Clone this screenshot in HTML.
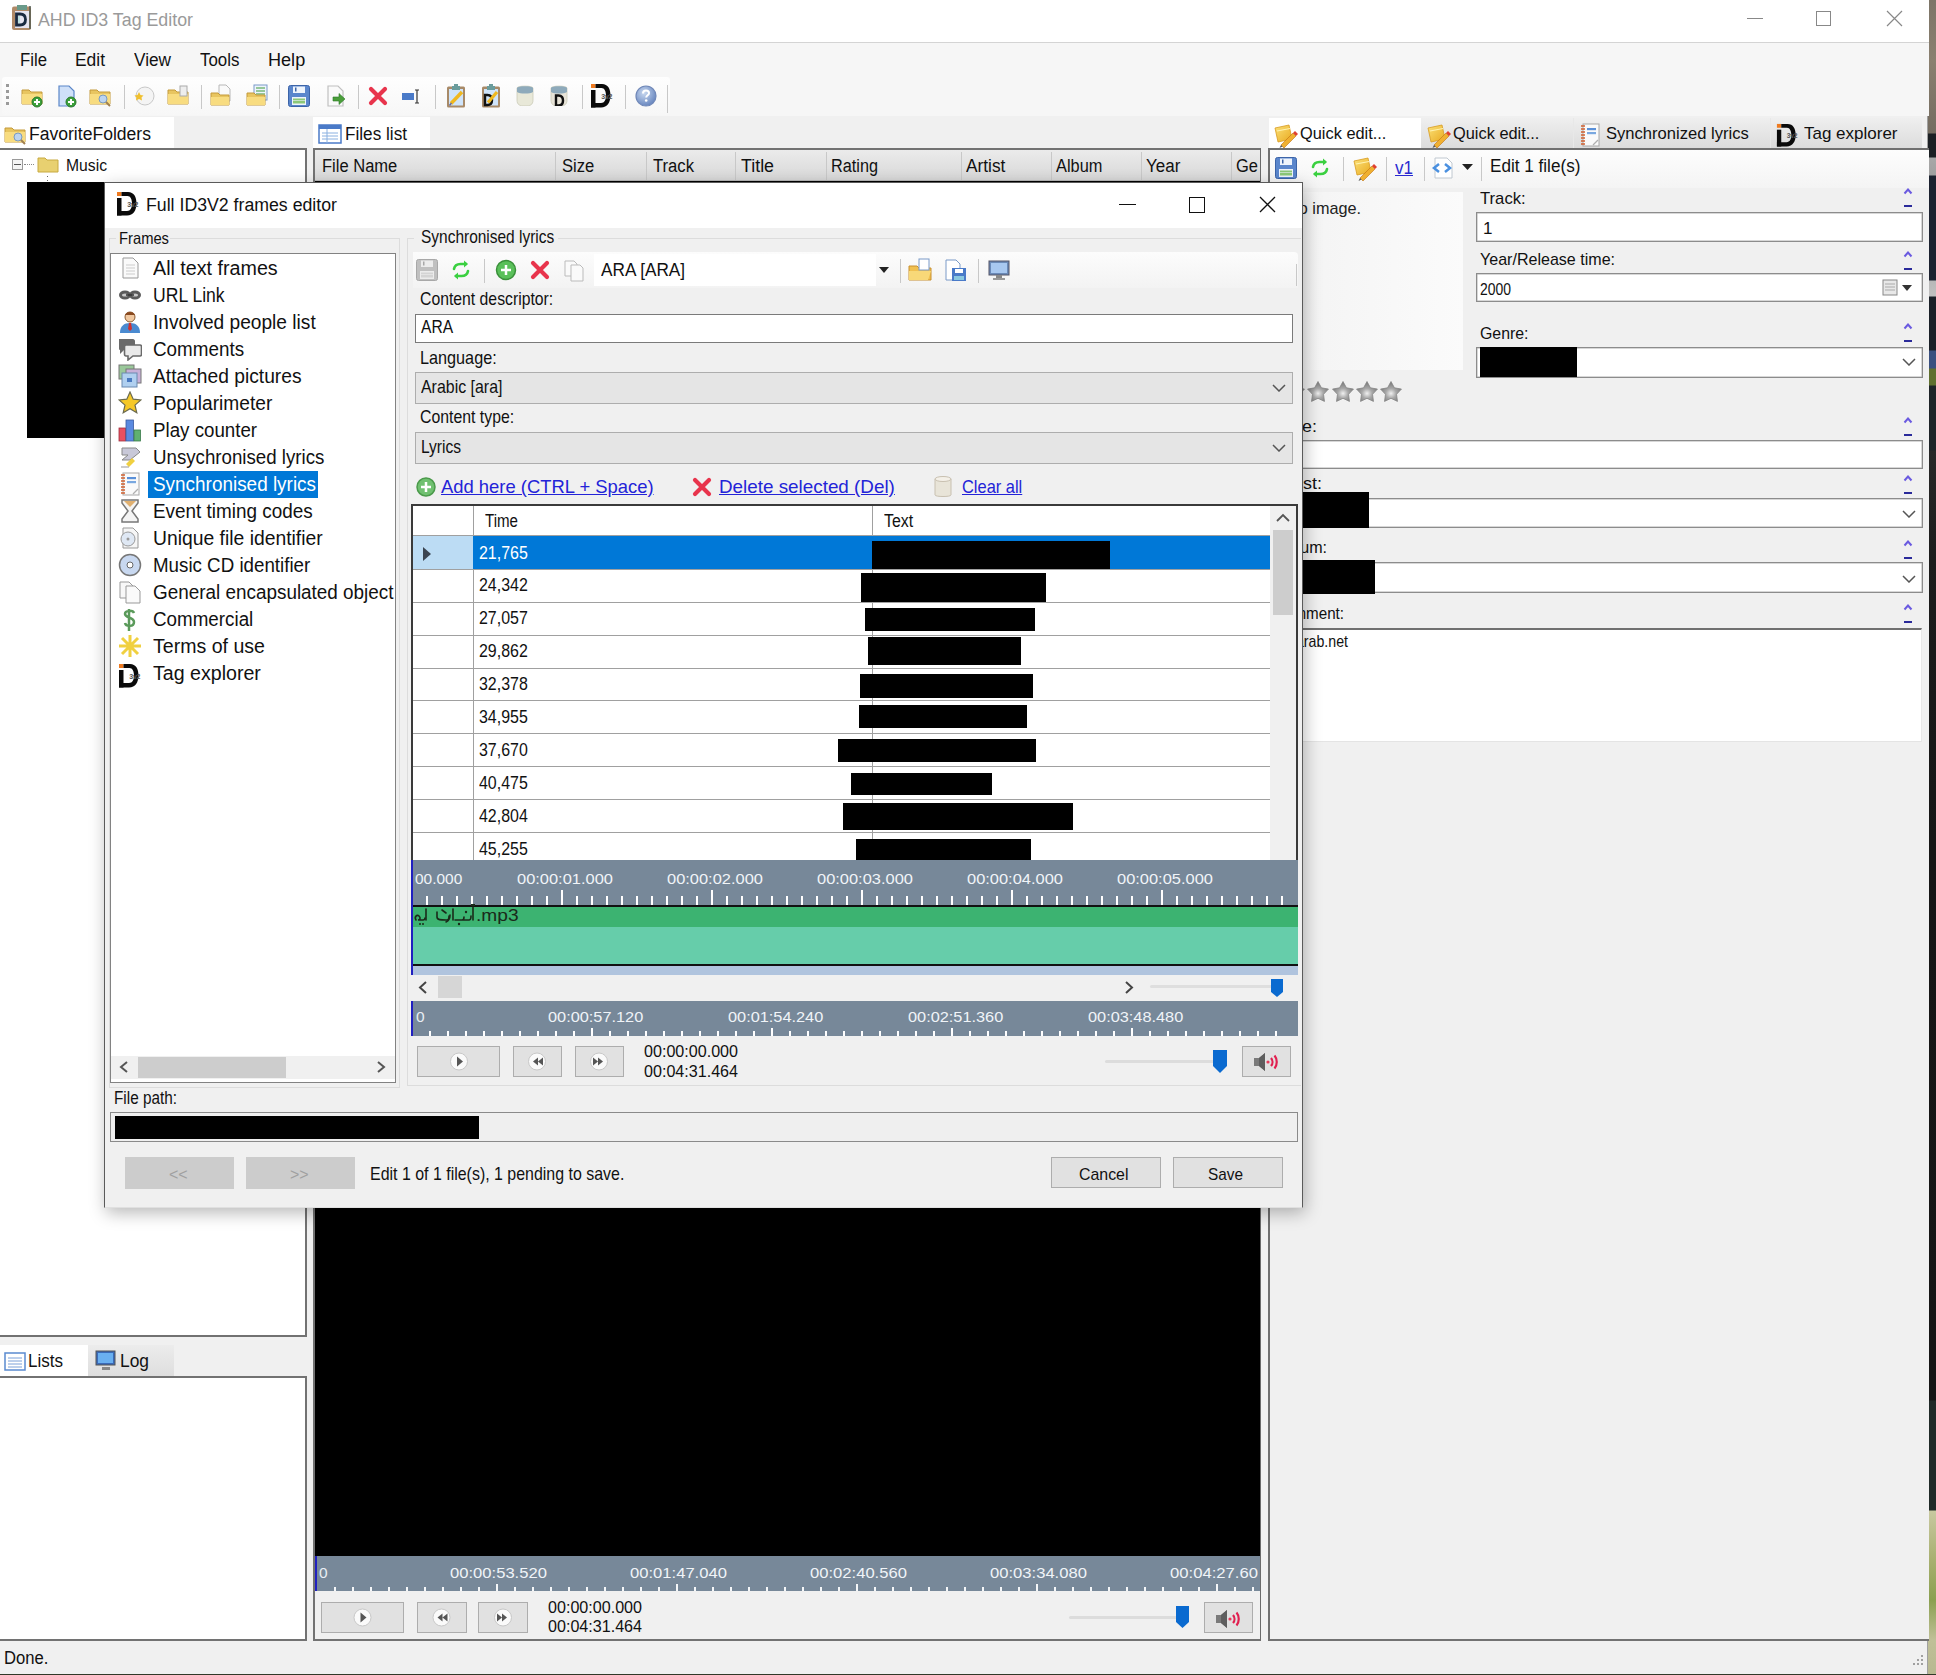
<!DOCTYPE html>
<html><head><meta charset="utf-8">
<style>
*{box-sizing:border-box;margin:0;padding:0}
html,body{width:1936px;height:1675px;overflow:hidden;background:#f0f0f0;font-family:"Liberation Sans",sans-serif;color:#000}
.a{position:absolute;display:block}
.t{position:absolute;white-space:nowrap;line-height:1}
#root{position:absolute;left:0;top:0;width:1936px;height:1675px;background:#f0f0f0;overflow:hidden}
</style></head><body><div id="root">
<div class="a" style="left:1928px;top:0px;width:8px;height:1675px;background:linear-gradient(#7d7568 0,#8a8070 60px,#746c60 133px,#1c2024 134px,#1c2024 157px,#a8a8a8 158px,#a0a0a0 175px,#1c2230 176px,#1c2230 280px,#b8b8b8 281px,#c0c0c0 296px,#1a2028 297px,#1a2028 350px,#3a5080 351px,#3a5080 368px,#607030 369px,#607030 385px,#1e2428 386px,#1e2428 450px,#282828 451px,#1c1c1c 560px,#161616 840px,#151515 1400px,#202a28 1401px,#202a28 1510px,#c8c8a0 1511px,#a8b070 1560px,#8aa050 1600px,#c0c098 1640px,#b8b890 1675px)"></div>
<div class="a" style="left:1927px;top:0px;width:1px;height:1675px;background:#a0a0a0"></div>
<div class="a" style="left:0px;top:0px;width:1929px;height:43px;background:#fff;border-bottom:1px solid #d4d4d4"></div>
<svg class="a" style="left:11px;top:5px" width="22" height="26" viewBox="0 0 22 26"><rect x="1" y="1.5" width="19" height="23.5" rx="2" fill="#b08a68"/><rect x="4" y="6" width="14" height="17" fill="#e6e4f0"/><path d="M6 0h10v5H6z" fill="#6a9a8a"/><path d="M19 1v23" stroke="#505a50" stroke-width="1.5"/><path d="M5.5 9h3.5c4 0 5.5 2.5 5.5 5.5S13 20 9 20H5.5z" fill="none" stroke="#1a2a40" stroke-width="2.8"/><path d="M8 11v7" stroke="#bfe0e0" stroke-width="2"/></svg>
<div class="t" style="left:38px;top:10.8px;font-size:18px;color:#9a9a9a;transform:scaleX(0.9888);transform-origin:0 0;">AHD ID3 Tag Editor</div>
<div class="a" style="left:1747px;top:18px;width:16px;height:1px;background:#888"></div>
<div class="a" style="left:1816px;top:11px;width:15px;height:15px;border:1px solid #888"></div>
<svg class="a" style="left:1886px;top:10px" width="17" height="17" viewBox="0 0 17 17"><path d="M1 1L16 16M16 1L1 16" stroke="#888" stroke-width="1.2"/></svg>
<div class="a" style="left:0px;top:43px;width:1929px;height:73px;background:#f6f6f6"></div>
<div class="t" style="left:20px;top:50.8px;font-size:18px;color:#111;transform:scaleX(0.9305);transform-origin:0 0;">File</div>
<div class="t" style="left:75px;top:50.8px;font-size:18px;color:#111;transform:scaleX(0.9673);transform-origin:0 0;">Edit</div>
<div class="t" style="left:134px;top:50.8px;font-size:18px;color:#111;transform:scaleX(0.9564);transform-origin:0 0;">View</div>
<div class="t" style="left:200px;top:50.8px;font-size:18px;color:#111;transform:scaleX(0.9374);transform-origin:0 0;">Tools</div>
<div class="t" style="left:268px;top:50.8px;font-size:18px;color:#111;transform:scaleX(1.0046);transform-origin:0 0;">Help</div>
<div class="a" style="left:2px;top:77px;width:668px;height:38px;background:linear-gradient(#fefefe,#f7f7f7);border-radius:3px"></div>
<div class="a" style="left:6px;top:84px;width:3px;height:3px;background:#9a9a9a"></div>
<div class="a" style="left:6px;top:90px;width:3px;height:3px;background:#9a9a9a"></div>
<div class="a" style="left:6px;top:96px;width:3px;height:3px;background:#9a9a9a"></div>
<div class="a" style="left:6px;top:102px;width:3px;height:3px;background:#9a9a9a"></div>
<svg class="a" style="left:20px;top:84px" width="24" height="24" viewBox="0 0 24 24"><path d="M2 6h7l2 2h11v12H2z" fill="#e8c560" stroke="#c49a3a" stroke-width="1"/><path d="M2 10h20v10H2z" fill="#f8dc80"/><circle cx="17" cy="18" r="5" fill="#3aa03a" stroke="#2a7a2a"/><path d="M14 18h6M17 15v6" stroke="#fff" stroke-width="2"/></svg>
<svg class="a" style="left:54px;top:84px" width="24" height="24" viewBox="0 0 24 24"><path d="M5 2h10l5 5v15H5z" fill="#cfe0f8" stroke="#5a86c8" stroke-width="1.2"/><circle cx="17" cy="18" r="5" fill="#3aa03a" stroke="#2a7a2a"/><path d="M14 18h6M17 15v6" stroke="#fff" stroke-width="2"/></svg>
<svg class="a" style="left:88px;top:84px" width="24" height="24" viewBox="0 0 24 24"><path d="M2 6h7l2 2h11v12H2z" fill="#e8c560" stroke="#c49a3a" stroke-width="1"/><path d="M2 10h20v10H2z" fill="#f8dc80"/><circle cx="15" cy="15" r="4" fill="#bcd4f0" stroke="#7a9ac0"/><path d="M18 18l4 4" stroke="#a08050" stroke-width="2"/></svg>
<div class="a" style="left:124px;top:85px;width:1px;height:24px;background:#c8c8c8"></div>
<svg class="a" style="left:132px;top:84px" width="24" height="24" viewBox="0 0 24 24"><circle cx="13" cy="12" r="9" fill="#f4f4f4" stroke="#c8c8c8"/><path d="M7 8l1.5 3 3 .5-2 2 .5 3-3-1.5-3 1.5.5-3-2-2 3-.5z" fill="#f0c030"/></svg>
<svg class="a" style="left:166px;top:84px" width="24" height="24" viewBox="0 0 24 24"><path d="M2 6h7l2 2h11v12H2z" fill="#e8c560" stroke="#c49a3a" stroke-width="1"/><path d="M2 10h20v10H2z" fill="#f8dc80"/><rect x="14" y="2" width="7" height="10" fill="#eee" stroke="#aaa"/></svg>
<div class="a" style="left:201px;top:85px;width:1px;height:24px;background:#c8c8c8"></div>
<svg class="a" style="left:209px;top:84px" width="24" height="24" viewBox="0 0 24 24"><path d="M10 1h7l4 4v12H10z" fill="#fafafa" stroke="#b8b8b8"/><path d="M2 9h7l2 2h9v10H2z" fill="#e8c560" stroke="#c49a3a"/><path d="M2 13h18v8H2z" fill="#f8dc80"/></svg>
<svg class="a" style="left:245px;top:84px" width="24" height="24" viewBox="0 0 24 24"><rect x="9" y="1" width="13" height="15" fill="#eef4fc" stroke="#7a9ac8"/><path d="M11 4h9M11 7h9M11 10h9" stroke="#78b878" stroke-width="1.4"/><path d="M2 9h7l2 2h9v10H2z" fill="#e8c560" stroke="#c49a3a"/><path d="M2 13h18v8H2z" fill="#f8dc80"/></svg>
<div class="a" style="left:279px;top:85px;width:1px;height:24px;background:#c8c8c8"></div>
<svg class="a" style="left:287px;top:84px" width="24" height="24" viewBox="0 0 24 24"><rect x="1.5" y="1.5" width="21" height="21" rx="2" fill="#5a86cc" stroke="#3c64a8"/><rect x="6" y="2.5" width="12" height="6.5" fill="#eef4fc"/><rect x="8" y="3.5" width="1.5" height="4" fill="#3c64a8"/><rect x="5" y="13" width="14" height="8" fill="#eef4fc"/><rect x="6" y="14.5" width="12" height="5" fill="#8cc878"/><path d="M6 16.5h12" stroke="#eef4fc" stroke-width=".6"/></svg>
<svg class="a" style="left:323px;top:84px" width="24" height="24" viewBox="0 0 24 24"><path d="M5 2h10l5 5v15H5z" fill="#fafafa" stroke="#c0c0c0" stroke-width="1.2"/><path d="M10 13h6v-3.5l6 5.5-6 5.5V17h-6z" fill="#4a9e3a" stroke="#2e7a2a" stroke-width=".6"/></svg>
<div class="a" style="left:358px;top:85px;width:1px;height:24px;background:#c8c8c8"></div>
<svg class="a" style="left:366px;top:84px" width="24" height="24" viewBox="0 0 24 24"><path d="M5 5L19 19M19 5L5 19" stroke="#e8344c" stroke-width="4.2" stroke-linecap="round"/></svg>
<svg class="a" style="left:400px;top:84px" width="24" height="24" viewBox="0 0 24 24"><rect x="2" y="9" width="12" height="7" fill="#4a7ac8"/><path d="M17 6v13M15 6h4M15 19h4" stroke="#333" stroke-width="1.2"/></svg>
<div class="a" style="left:435px;top:85px;width:1px;height:24px;background:#c8c8c8"></div>
<svg class="a" style="left:446px;top:84px" width="20" height="24" viewBox="0 0 20 24"><rect x="1" y="2.5" width="18" height="21" rx="1.5" fill="#a88a68"/><rect x="3" y="5" width="14" height="16.5" fill="#cfe4fa"/><path d="M6 2h8v4H6z" fill="#6a9c9c"/><path d="M8 0h4v2H8z" fill="#6a9c9c"/><path d="M5 19.5L16 8" stroke="#f0b820" stroke-width="3.5"/><path d="M3.5 21.5l2-2.5" stroke="#6a6a9a" stroke-width="1.5"/></svg>
<svg class="a" style="left:481px;top:84px" width="20" height="24" viewBox="0 0 20 24"><rect x="1" y="2.5" width="18" height="21" rx="1.5" fill="#a88a68"/><rect x="3" y="5" width="14" height="16.5" fill="#cfe4fa"/><path d="M6 2h8v4H6z" fill="#6a9c9c"/><path d="M8 0h4v2H8z" fill="#6a9c9c"/><path d="M4 11h2.5c3.5 0 4.5 2.5 4.5 5s-1 5-4.5 5H4z" fill="none" stroke="#111" stroke-width="2.4"/><path d="M7 18.5L16 8" stroke="#f0b820" stroke-width="3.2"/></svg>
<svg class="a" style="left:516px;top:85px" width="18" height="21" viewBox="0 0 18 21"><path d="M1 3c0-2.5 16-2.5 16 0v12c0 5-3 6-8 6s-8-1-8-6z" fill="#e8e8d8" stroke="#cacab8" stroke-width=".8"/><path d="M1 3c0-2.5 16-2.5 16 0v4c-3 2-13 2-16 0z" fill="#8eaabb"/></svg>
<svg class="a" style="left:550px;top:85px" width="18" height="21" viewBox="0 0 18 21"><path d="M1 3c0-2.5 16-2.5 16 0v12c0 5-3 6-8 6s-8-1-8-6z" fill="#e8e4d8" stroke="#cacab8" stroke-width=".8"/><path d="M1 3c0-2.5 16-2.5 16 0v4c-3 2-13 2-16 0z" fill="#8eaabb"/><path d="M6 10.5h2.5c3.5 0 4.5 2.5 4.5 5s-1 5-4.5 5H6z" fill="none" stroke="#111" stroke-width="2.4"/></svg>
<div class="a" style="left:582px;top:85px;width:1px;height:24px;background:#c8c8c8"></div>
<svg class="a" style="left:589px;top:82px" width="26" height="26" viewBox="0 0 26 26"><rect x="2" y="2" width="4.5" height="4" fill="#ee7a20"/><rect x="2" y="8" width="4.5" height="17.5" fill="#0a0a0a"/><path d="M6.5 2H13C19 2 21.5 7 21.5 13.5S18.5 25.5 12 25.5H2V21H12C15.5 21 17 17.5 17 13.5S15.5 6 12.5 6H6.5z" fill="#0a0a0a"/><text x="12.3" y="16.6" font-size="7" font-weight="bold" fill="#555" font-family="Liberation Sans" letter-spacing="-0.3">3v2</text></svg>
<div class="a" style="left:625px;top:85px;width:1px;height:24px;background:#c8c8c8"></div>
<svg class="a" style="left:634px;top:84px" width="24" height="24" viewBox="0 0 24 24"><defs><radialGradient id="hg" cx="40%" cy="35%" r="65%"><stop offset="0" stop-color="#c8d8f0"/><stop offset="1" stop-color="#6a88c0"/></radialGradient></defs><circle cx="12" cy="12" r="10" fill="url(#hg)" stroke="#7088b8" stroke-width="1.2"/><path d="M9 9.5c0-2 1.3-3 3-3s3 1 3 2.7c0 2-2.8 2.3-2.8 4.3" stroke="#fff" stroke-width="2" fill="none"/><circle cx="12.2" cy="16.5" r="1.3" fill="#fff"/></svg>
<div class="a" style="left:667px;top:85px;width:1px;height:28px;background:#c8c8c8"></div>
<div class="a" style="left:0px;top:117px;width:174px;height:32px;background:#fff"></div>
<svg class="a" style="left:3px;top:122px" width="24" height="24" viewBox="0 0 24 24"><path d="M2 6h7l2 2h11v12H2z" fill="#e8c560" stroke="#c49a3a" stroke-width="1"/><path d="M2 10h20v10H2z" fill="#f8dc80"/><circle cx="15" cy="15" r="4" fill="#bcd4f0" stroke="#7a9ac0"/><path d="M18 18l4 4" stroke="#a08050" stroke-width="2"/></svg>
<div class="t" style="left:29px;top:124.8px;font-size:18px;color:#111;transform:scaleX(0.9753);transform-origin:0 0;">FavoriteFolders</div>
<div class="a" style="left:-2px;top:148px;width:309px;height:1189px;background:#fff;border:2px solid #727272"></div>
<div class="a" style="left:12px;top:159px;width:11px;height:11px;border:1px solid #9a9a9a;background:#f4f4f4"></div>
<div class="a" style="left:14px;top:164px;width:7px;height:1px;background:#555"></div>
<div class="a" style="left:24px;top:164px;width:10px;height:1px;border-top:1px dotted #888"></div>
<svg class="a" style="left:36px;top:152px" width="24" height="24" viewBox="0 0 24 24"><path d="M2 6h7l2 2h11v12H2z" fill="#e8d070" stroke="#c8aa40"/></svg>
<div class="t" style="left:66px;top:156.5px;font-size:16.5px;color:#111;transform:scaleX(0.9514);transform-origin:0 0;">Music</div>
<div class="a" style="left:47px;top:176px;width:1px;height:1px;background:#666"></div>
<div class="a" style="left:47px;top:180px;width:1px;height:1px;background:#666"></div>
<div class="a" style="left:0px;top:1345px;width:88px;height:32px;background:#fff"></div>
<div class="a" style="left:88px;top:1345px;width:86px;height:31px;background:linear-gradient(#ececec,#dedede)"></div>
<svg class="a" style="left:4px;top:1350px" width="22" height="22" viewBox="0 0 22 22"><rect x="1" y="3" width="20" height="17" fill="#fff" stroke="#5a8ad0" stroke-width="1.5"/><path d="M4 8h14M4 11h14M4 14h14M4 17h14" stroke="#7aa0d8"/></svg>
<div class="t" style="left:28.2px;top:1351.7px;font-size:18px;color:#111;transform:scaleX(0.9455);transform-origin:0 0;">Lists</div>
<svg class="a" style="left:94px;top:1348px" width="24" height="24" viewBox="0 0 24 24"><rect x="2" y="3" width="19" height="14" fill="#3a6ab8" stroke="#555"/><rect x="4" y="5" width="15" height="10" fill="#6ab0f0"/><path d="M8 19h8v3H8z" fill="#888"/></svg>
<div class="t" style="left:120px;top:1351.7px;font-size:18px;color:#111;transform:scaleX(0.9652);transform-origin:0 0;">Log</div>
<div class="a" style="left:-2px;top:1376px;width:309px;height:265px;background:#fff;border:2px solid #727272"></div>
<div class="a" style="left:313px;top:117px;width:117px;height:32px;background:#fff"></div>
<svg class="a" style="left:318px;top:122px" width="24" height="24" viewBox="0 0 24 24"><rect x="1" y="3" width="22" height="18" fill="#fff" stroke="#4a7ac8" stroke-width="1.5"/><rect x="1" y="3" width="22" height="4" fill="#4a7ac8"/><path d="M4 11h16M4 14h16M4 17h16M9 7v14" stroke="#8ab0e0"/></svg>
<div class="t" style="left:345px;top:124.8px;font-size:18px;color:#111;transform:scaleX(0.9536);transform-origin:0 0;">Files list</div>
<div class="a" style="left:313px;top:148px;width:948px;height:1493px;background:#000;border:2px solid #727272;border-right:1px solid #6a6a6a"></div>
<div class="a" style="left:315px;top:150px;width:945px;height:31px;background:linear-gradient(#ebebeb,#d8d8d8);border-bottom:1px solid #b8b8b8"></div>
<div class="t" style="left:322px;top:157.0px;font-size:18px;color:#111;transform:scaleX(0.9178);transform-origin:0 0;">File Name</div>
<div class="t" style="left:561.6px;top:157.0px;font-size:18px;color:#111;transform:scaleX(0.9224);transform-origin:0 0;">Size</div>
<div class="t" style="left:652.7px;top:157.0px;font-size:18px;color:#111;transform:scaleX(0.9246);transform-origin:0 0;">Track</div>
<div class="t" style="left:741.3px;top:157.0px;font-size:18px;color:#111;transform:scaleX(0.9897);transform-origin:0 0;">Title</div>
<div class="t" style="left:831.3px;top:157.0px;font-size:18px;color:#111;transform:scaleX(0.9030);transform-origin:0 0;">Rating</div>
<div class="t" style="left:965.6px;top:157.0px;font-size:18px;color:#111;transform:scaleX(0.9585);transform-origin:0 0;">Artist</div>
<div class="t" style="left:1056.3px;top:157.0px;font-size:18px;color:#111;transform:scaleX(0.9092);transform-origin:0 0;">Album</div>
<div class="t" style="left:1146.3px;top:157.0px;font-size:18px;color:#111;transform:scaleX(0.9430);transform-origin:0 0;">Year</div>
<div class="t" style="left:1236px;top:157.0px;font-size:18px;color:#111;transform:scaleX(0.9161);transform-origin:0 0;">Ge</div>
<div class="a" style="left:555px;top:152px;width:1px;height:28px;background:#c8c8c8"></div>
<div class="a" style="left:646px;top:152px;width:1px;height:28px;background:#c8c8c8"></div>
<div class="a" style="left:735px;top:152px;width:1px;height:28px;background:#c8c8c8"></div>
<div class="a" style="left:826px;top:152px;width:1px;height:28px;background:#c8c8c8"></div>
<div class="a" style="left:961px;top:152px;width:1px;height:28px;background:#c8c8c8"></div>
<div class="a" style="left:1051px;top:152px;width:1px;height:28px;background:#c8c8c8"></div>
<div class="a" style="left:1141px;top:152px;width:1px;height:28px;background:#c8c8c8"></div>
<div class="a" style="left:1231px;top:152px;width:1px;height:28px;background:#c8c8c8"></div>
<div class="a" style="left:315px;top:1556px;width:945px;height:35px;background:#778899"></div>
<div class="a" style="left:315px;top:1556px;width:2px;height:35px;background:#2020c0"></div>
<div class="t" style="left:319px;top:1564.5px;font-size:15.5px;color:#e8eef4;">0</div>
<div class="t" style="left:450px;top:1564.5px;font-size:15.5px;color:#f0f4f8;transform:scaleX(1.0711);transform-origin:0 0;">00:00:53.520</div>
<div class="t" style="left:630px;top:1564.5px;font-size:15.5px;color:#f0f4f8;transform:scaleX(1.0711);transform-origin:0 0;">00:01:47.040</div>
<div class="t" style="left:810px;top:1564.5px;font-size:15.5px;color:#f0f4f8;transform:scaleX(1.0711);transform-origin:0 0;">00:02:40.560</div>
<div class="t" style="left:990px;top:1564.5px;font-size:15.5px;color:#f0f4f8;transform:scaleX(1.0711);transform-origin:0 0;">00:03:34.080</div>
<div class="t" style="left:1170px;top:1564.5px;font-size:15.5px;color:#f0f4f8;transform:scaleX(1.0740);transform-origin:0 0;">00:04:27.60</div>
<div class="a" style="left:334px;top:1587px;width:2px;height:4px;background:#f4f6f8"></div>
<div class="a" style="left:352px;top:1587px;width:2px;height:4px;background:#f4f6f8"></div>
<div class="a" style="left:370px;top:1587px;width:2px;height:4px;background:#f4f6f8"></div>
<div class="a" style="left:388px;top:1587px;width:2px;height:4px;background:#f4f6f8"></div>
<div class="a" style="left:406px;top:1587px;width:2px;height:4px;background:#f4f6f8"></div>
<div class="a" style="left:424px;top:1587px;width:2px;height:4px;background:#f4f6f8"></div>
<div class="a" style="left:442px;top:1587px;width:2px;height:4px;background:#f4f6f8"></div>
<div class="a" style="left:460px;top:1587px;width:2px;height:4px;background:#f4f6f8"></div>
<div class="a" style="left:478px;top:1587px;width:2px;height:4px;background:#f4f6f8"></div>
<div class="a" style="left:496px;top:1584px;width:2px;height:7px;background:#f4f6f8"></div>
<div class="a" style="left:514px;top:1587px;width:2px;height:4px;background:#f4f6f8"></div>
<div class="a" style="left:532px;top:1587px;width:2px;height:4px;background:#f4f6f8"></div>
<div class="a" style="left:550px;top:1587px;width:2px;height:4px;background:#f4f6f8"></div>
<div class="a" style="left:568px;top:1587px;width:2px;height:4px;background:#f4f6f8"></div>
<div class="a" style="left:586px;top:1587px;width:2px;height:4px;background:#f4f6f8"></div>
<div class="a" style="left:604px;top:1587px;width:2px;height:4px;background:#f4f6f8"></div>
<div class="a" style="left:622px;top:1587px;width:2px;height:4px;background:#f4f6f8"></div>
<div class="a" style="left:640px;top:1587px;width:2px;height:4px;background:#f4f6f8"></div>
<div class="a" style="left:658px;top:1587px;width:2px;height:4px;background:#f4f6f8"></div>
<div class="a" style="left:676px;top:1584px;width:2px;height:7px;background:#f4f6f8"></div>
<div class="a" style="left:694px;top:1587px;width:2px;height:4px;background:#f4f6f8"></div>
<div class="a" style="left:712px;top:1587px;width:2px;height:4px;background:#f4f6f8"></div>
<div class="a" style="left:730px;top:1587px;width:2px;height:4px;background:#f4f6f8"></div>
<div class="a" style="left:748px;top:1587px;width:2px;height:4px;background:#f4f6f8"></div>
<div class="a" style="left:766px;top:1587px;width:2px;height:4px;background:#f4f6f8"></div>
<div class="a" style="left:784px;top:1587px;width:2px;height:4px;background:#f4f6f8"></div>
<div class="a" style="left:802px;top:1587px;width:2px;height:4px;background:#f4f6f8"></div>
<div class="a" style="left:820px;top:1587px;width:2px;height:4px;background:#f4f6f8"></div>
<div class="a" style="left:838px;top:1587px;width:2px;height:4px;background:#f4f6f8"></div>
<div class="a" style="left:856px;top:1584px;width:2px;height:7px;background:#f4f6f8"></div>
<div class="a" style="left:874px;top:1587px;width:2px;height:4px;background:#f4f6f8"></div>
<div class="a" style="left:892px;top:1587px;width:2px;height:4px;background:#f4f6f8"></div>
<div class="a" style="left:910px;top:1587px;width:2px;height:4px;background:#f4f6f8"></div>
<div class="a" style="left:928px;top:1587px;width:2px;height:4px;background:#f4f6f8"></div>
<div class="a" style="left:946px;top:1587px;width:2px;height:4px;background:#f4f6f8"></div>
<div class="a" style="left:964px;top:1587px;width:2px;height:4px;background:#f4f6f8"></div>
<div class="a" style="left:982px;top:1587px;width:2px;height:4px;background:#f4f6f8"></div>
<div class="a" style="left:1000px;top:1587px;width:2px;height:4px;background:#f4f6f8"></div>
<div class="a" style="left:1018px;top:1587px;width:2px;height:4px;background:#f4f6f8"></div>
<div class="a" style="left:1036px;top:1584px;width:2px;height:7px;background:#f4f6f8"></div>
<div class="a" style="left:1054px;top:1587px;width:2px;height:4px;background:#f4f6f8"></div>
<div class="a" style="left:1072px;top:1587px;width:2px;height:4px;background:#f4f6f8"></div>
<div class="a" style="left:1090px;top:1587px;width:2px;height:4px;background:#f4f6f8"></div>
<div class="a" style="left:1108px;top:1587px;width:2px;height:4px;background:#f4f6f8"></div>
<div class="a" style="left:1126px;top:1587px;width:2px;height:4px;background:#f4f6f8"></div>
<div class="a" style="left:1144px;top:1587px;width:2px;height:4px;background:#f4f6f8"></div>
<div class="a" style="left:1162px;top:1587px;width:2px;height:4px;background:#f4f6f8"></div>
<div class="a" style="left:1180px;top:1587px;width:2px;height:4px;background:#f4f6f8"></div>
<div class="a" style="left:1198px;top:1587px;width:2px;height:4px;background:#f4f6f8"></div>
<div class="a" style="left:1216px;top:1584px;width:2px;height:7px;background:#f4f6f8"></div>
<div class="a" style="left:1234px;top:1587px;width:2px;height:4px;background:#f4f6f8"></div>
<div class="a" style="left:1252px;top:1587px;width:2px;height:4px;background:#f4f6f8"></div>
<div class="a" style="left:315px;top:1591px;width:945px;height:48px;background:#f0f0f0"></div>
<div class="a" style="left:321px;top:1602px;width:83px;height:31px;background:#e1e1e1;border:1px solid #adadad"></div>
<div class="a" style="left:417px;top:1602px;width:50px;height:31px;background:#e1e1e1;border:1px solid #adadad"></div>
<div class="a" style="left:478px;top:1602px;width:50px;height:31px;background:#e1e1e1;border:1px solid #adadad"></div>
<svg class="a" style="left:321px;top:1602px" width="210" height="31" viewBox="0 0 210 31"><circle cx="41.5" cy="15.5" r="8.5" fill="#fafafa" stroke="#c8c8c8"/><path d="M39.5 10.5l6 5-6 5z" fill="#555"/><circle cx="120.5" cy="15.5" r="8.5" fill="#fafafa" stroke="#c8c8c8"/><path d="M121.5 11.5l-5 4 5 4zM126.5 11.5l-5 4 5 4z" fill="#555"/><circle cx="182" cy="15.5" r="8.5" fill="#fafafa" stroke="#c8c8c8"/><path d="M176 11.5l5 4-5 4zM181 11.5l5 4-5 4z" fill="#555"/></svg>
<div class="t" style="left:547.7px;top:1599.4px;font-size:17px;color:#111;transform:scaleX(0.9473);transform-origin:0 0;">00:00:00.000</div>
<div class="t" style="left:547.7px;top:1618.2px;font-size:17px;color:#111;transform:scaleX(0.9473);transform-origin:0 0;">00:04:31.464</div>
<div class="a" style="left:1069px;top:1616px;width:108px;height:3px;background:#dcdcdc;border-radius:2px"></div>
<svg class="a" style="left:1175px;top:1605px" width="15" height="24" viewBox="0 0 15 24"><path d="M1 1h13v16l-6.5 6-6.5-6z" fill="#0a6ad0"/></svg>
<div class="a" style="left:1204px;top:1602px;width:49px;height:31px;background:#e1e1e1;border:1px solid #adadad"></div>
<svg class="a" style="left:1216px;top:1610px" width="25" height="18" viewBox="0 0 25 18"><path d="M0 5h5l6-5v18l-6-5H0z" fill="#7a7a7a"/><path d="M5 5l6-5v18l-6-5z" fill="#5e5e5e"/><circle cx="14" cy="9" r="1.6" fill="#e83a5a"/><path d="M17 5c2 2.3 2 5.7 0 8M20.5 2.5c3 3.5 3 9.5 0 13" stroke="#e02050" stroke-width="2.2" fill="none"/></svg>
<div class="a" style="left:1268px;top:148px;width:661px;height:1493px;background:#f0f0f0;border:2px solid #727272;border-right:none"></div>
<div class="a" style="left:1269px;top:118px;width:152px;height:31px;background:#fff"></div>
<div class="a" style="left:1421px;top:118px;width:153px;height:30px;background:linear-gradient(#efefef,#dcdcdc);border-right:1px solid #e8e8e8"></div>
<div class="a" style="left:1574px;top:118px;width:197px;height:30px;background:linear-gradient(#efefef,#dcdcdc);border-right:1px solid #e8e8e8"></div>
<div class="a" style="left:1771px;top:118px;width:151px;height:30px;background:linear-gradient(#efefef,#dcdcdc)"></div>
<svg class="a" style="left:1273px;top:123px" width="25" height="25" viewBox="0 0 25 25"><defs><linearGradient id="eg" x1="0" y1="0" x2="1" y2="1"><stop offset="0" stop-color="#fbe27a"/><stop offset="1" stop-color="#e9a91e"/></linearGradient></defs><path d="M2 5l14-3 3 14-14 3z" fill="url(#eg)" stroke="#d89a20" stroke-width=".8"/><path d="M4 8l13-2.5" stroke="#fff3b0" stroke-width="1.2"/><path d="M8 22l12-12 3 3-12 12z" fill="#f0b030" stroke="#c07010" stroke-width=".6"/><path d="M20 10l2-2 3 3-2 2z" fill="#e04030"/><path d="M8 22l-1.5 3 3-1.5z" fill="#555"/></svg>
<div class="t" style="left:1300px;top:124.6px;font-size:17px;color:#111;transform:scaleX(0.9628);transform-origin:0 0;">Quick edit...</div>
<svg class="a" style="left:1426px;top:123px" width="25" height="25" viewBox="0 0 25 25"><defs><linearGradient id="eg" x1="0" y1="0" x2="1" y2="1"><stop offset="0" stop-color="#fbe27a"/><stop offset="1" stop-color="#e9a91e"/></linearGradient></defs><path d="M2 5l14-3 3 14-14 3z" fill="url(#eg)" stroke="#d89a20" stroke-width=".8"/><path d="M4 8l13-2.5" stroke="#fff3b0" stroke-width="1.2"/><path d="M8 22l12-12 3 3-12 12z" fill="#f0b030" stroke="#c07010" stroke-width=".6"/><path d="M20 10l2-2 3 3-2 2z" fill="#e04030"/><path d="M8 22l-1.5 3 3-1.5z" fill="#555"/></svg>
<div class="t" style="left:1453.2px;top:124.6px;font-size:17px;color:#111;transform:scaleX(0.9628);transform-origin:0 0;">Quick edit...</div>
<svg class="a" style="left:1578px;top:123px" width="24" height="24" viewBox="0 0 24 24"><rect x="5" y="1" width="16" height="22" fill="#fafafa" stroke="#a8a8a8"/><path d="M3 3h4M3 6h4M3 9h4M3 12h4M3 15h4M3 18h4M3 21h4" stroke="#d06030" stroke-width="1.6"/><rect x="9" y="5" width="9" height="2.2" fill="#5a90d8"/><rect x="9" y="9" width="9" height="2.2" fill="#7aa8e0"/><path d="M15 22l5-5" stroke="#b0b0b0" stroke-width="1.2"/></svg>
<div class="t" style="left:1606px;top:124.6px;font-size:17px;color:#111;transform:scaleX(0.9745);transform-origin:0 0;">Synchronized lyrics</div>
<svg class="a" style="left:1775px;top:122px" width="25" height="25" viewBox="0 0 26 26"><rect x="2" y="2" width="4.5" height="4" fill="#ee7a20"/><rect x="2" y="8" width="4.5" height="17.5" fill="#0a0a0a"/><path d="M6.5 2H13C19 2 21.5 7 21.5 13.5S18.5 25.5 12 25.5H2V21H12C15.5 21 17 17.5 17 13.5S15.5 6 12.5 6H6.5z" fill="#0a0a0a"/><text x="12.3" y="16.6" font-size="7" font-weight="bold" fill="#555" font-family="Liberation Sans" letter-spacing="-0.3">3v2</text></svg>
<div class="t" style="left:1803.5px;top:124.6px;font-size:17px;color:#111;transform:scaleX(0.9997);transform-origin:0 0;">Tag explorer</div>
<div class="a" style="left:1268px;top:148px;width:661px;height:2px;background:#707070"></div>
<div class="a" style="left:1268px;top:148px;width:2px;height:1493px;background:#707070"></div>
<div class="a" style="left:1270px;top:150px;width:659px;height:38px;background:linear-gradient(#fdfdfd,#f4f4f4)"></div>
<svg class="a" style="left:1274px;top:156px" width="24" height="24" viewBox="0 0 24 24"><rect x="1.5" y="1.5" width="21" height="21" rx="2" fill="#5a86cc" stroke="#3c64a8"/><rect x="6" y="2.5" width="12" height="6.5" fill="#eef4fc"/><rect x="8" y="3.5" width="1.5" height="4" fill="#3c64a8"/><rect x="5" y="13" width="14" height="8" fill="#eef4fc"/><rect x="6" y="14.5" width="12" height="5" fill="#8cc878"/><path d="M6 16.5h12" stroke="#eef4fc" stroke-width=".6"/></svg>
<svg class="a" style="left:1308px;top:156px" width="24" height="24" viewBox="0 0 24 24"><path d="M5 11c.5-3 3-5 6.5-5H17" stroke="#3ad040" stroke-width="2.6" fill="none" stroke-linecap="round"/><path d="M15 2.5l4 3.5-4 3.5z" fill="#3ad040"/><path d="M19 13c-.5 3-3 5-6.5 5H7" stroke="#3ad040" stroke-width="2.6" fill="none" stroke-linecap="round"/><path d="M9 14.5L5 18l4 3.5z" fill="#3ad040"/></svg>
<div class="a" style="left:1343px;top:157px;width:1px;height:24px;background:#c8c8c8"></div>
<svg class="a" style="left:1352px;top:156px" width="25" height="25" viewBox="0 0 25 25"><defs><linearGradient id="eg" x1="0" y1="0" x2="1" y2="1"><stop offset="0" stop-color="#fbe27a"/><stop offset="1" stop-color="#e9a91e"/></linearGradient></defs><path d="M2 5l14-3 3 14-14 3z" fill="url(#eg)" stroke="#d89a20" stroke-width=".8"/><path d="M4 8l13-2.5" stroke="#fff3b0" stroke-width="1.2"/><path d="M8 22l12-12 3 3-12 12z" fill="#f0b030" stroke="#c07010" stroke-width=".6"/><path d="M20 10l2-2 3 3-2 2z" fill="#e04030"/><path d="M8 22l-1.5 3 3-1.5z" fill="#555"/></svg>
<div class="a" style="left:1386px;top:157px;width:1px;height:24px;background:#c8c8c8"></div>
<div class="t" style="left:1395px;top:158.8px;font-size:18px;color:#2a2ad0;transform:scaleX(0.9466);transform-origin:0 0;text-decoration:underline">v1</div>
<div class="a" style="left:1424px;top:157px;width:1px;height:24px;background:#c8c8c8"></div>
<svg class="a" style="left:1430px;top:156px" width="26" height="24" viewBox="0 0 26 24"><path d="M5 2h12l5 5v15H5z" fill="#fff" stroke="#c0c8d0"/><path d="M9 8l-5 4 5 4M15 8l5 4-5 4" stroke="#4a90e0" stroke-width="2.5" fill="none"/></svg>
<svg class="a" style="left:1462px;top:164px" width="11" height="7" viewBox="0 0 11 7"><path d="M0 0h11l-5.5 6z" fill="#222"/></svg>
<div class="a" style="left:1481px;top:157px;width:1px;height:24px;background:#c8c8c8"></div>
<div class="t" style="left:1490px;top:158.4px;font-size:17.5px;color:#111;transform:scaleX(0.9785);transform-origin:0 0;">Edit 1 file(s)</div>
<div class="t" style="left:1480px;top:189.8px;font-size:17px;color:#111;transform:scaleX(0.9808);transform-origin:0 0;">Track:</div>
<svg class="a" style="left:1903px;top:188px" width="10" height="7" viewBox="0 0 10 7"><path d="M1.5 5.5L5 1.5l3.5 4" stroke="#6a5ae0" stroke-width="2" fill="none"/></svg>
<div class="a" style="left:1904px;top:205px;width:8px;height:2px;background:#2a2a9a"></div>
<div class="a" style="left:1476px;top:212px;width:447px;height:30px;background:#fff;border:1px solid #8c8c8c;box-shadow:inset 0 0 0 0.5px #b0b0b0"></div>
<div class="t" style="left:1483px;top:219.6px;font-size:17px;color:#111;">1</div>
<div class="t" style="left:1480px;top:251.4px;font-size:17px;color:#111;transform:scaleX(0.9442);transform-origin:0 0;">Year/Release time:</div>
<svg class="a" style="left:1903px;top:250.60000000000002px" width="10" height="7" viewBox="0 0 10 7"><path d="M1.5 5.5L5 1.5l3.5 4" stroke="#6a5ae0" stroke-width="2" fill="none"/></svg>
<div class="a" style="left:1904px;top:267.6px;width:8px;height:2px;background:#2a2a9a"></div>
<div class="a" style="left:1476px;top:273px;width:447px;height:29px;background:#fff;border:1px solid #8c8c8c;box-shadow:inset 0 0 0 0.5px #b0b0b0"></div>
<div class="t" style="left:1480px;top:280.6px;font-size:17px;color:#111;transform:scaleX(0.8198);transform-origin:0 0;">2000</div>
<svg class="a" style="left:1882px;top:278px" width="36" height="20" viewBox="0 0 36 20"><rect x="1" y="2" width="14" height="15" fill="#e8e8e8" stroke="#888"/><path d="M3 6h10M3 9h10M3 12h10" stroke="#aaa"/><path d="M20 7h10l-5 6z" fill="#333"/></svg>
<div class="t" style="left:1480px;top:324.8px;font-size:17px;color:#111;transform:scaleX(0.9335);transform-origin:0 0;">Genre:</div>
<svg class="a" style="left:1903px;top:323.3px" width="10" height="7" viewBox="0 0 10 7"><path d="M1.5 5.5L5 1.5l3.5 4" stroke="#6a5ae0" stroke-width="2" fill="none"/></svg>
<div class="a" style="left:1904px;top:340.3px;width:8px;height:2px;background:#2a2a9a"></div>
<div class="a" style="left:1476px;top:347px;width:447px;height:31px;background:#fff;border:1px solid #8c8c8c;box-shadow:inset 0 0 0 0.5px #b0b0b0"></div>
<div class="a" style="left:1480px;top:347px;width:97px;height:30px;background:#000"></div>
<svg class="a" style="left:1902px;top:358px" width="14" height="8" viewBox="0 0 14 8"><path d="M1 1l6 6 6-6" stroke="#555" stroke-width="1.5" fill="none"/></svg>
<div class="a" style="left:1302px;top:192px;width:161px;height:178px;background:linear-gradient(90deg,#f4f4f4,#fbfbfb)"></div>
<div class="t" style="left:1287px;top:200.2px;font-size:17px;color:#222;transform:scaleX(0.9552);transform-origin:0 0;">No image.</div>
<svg class="a" style="left:1283px;top:380px" width="22" height="23" viewBox="0 0 22 23"><defs><radialGradient id="sg" cx="50%" cy="60%" r="55%"><stop offset="0" stop-color="#f0f0f0"/><stop offset=".45" stop-color="#a8a8a8"/><stop offset="1" stop-color="#7a7a7a"/></radialGradient></defs><path d="M11 1.5L14.41 7.81 21.46 9.1 16.52 14.29 17.47 21.4 11 18.3 4.53 21.4 5.48 14.29 .54 9.1 7.59 7.81z" fill="url(#sg)" stroke="#858585" stroke-width=".8" stroke-linejoin="round"/></svg>
<svg class="a" style="left:1307.4px;top:380px" width="22" height="23" viewBox="0 0 22 23"><defs><radialGradient id="sg" cx="50%" cy="60%" r="55%"><stop offset="0" stop-color="#f0f0f0"/><stop offset=".45" stop-color="#a8a8a8"/><stop offset="1" stop-color="#7a7a7a"/></radialGradient></defs><path d="M11 1.5L14.41 7.81 21.46 9.1 16.52 14.29 17.47 21.4 11 18.3 4.53 21.4 5.48 14.29 .54 9.1 7.59 7.81z" fill="url(#sg)" stroke="#858585" stroke-width=".8" stroke-linejoin="round"/></svg>
<svg class="a" style="left:1331.5px;top:380px" width="22" height="23" viewBox="0 0 22 23"><defs><radialGradient id="sg" cx="50%" cy="60%" r="55%"><stop offset="0" stop-color="#f0f0f0"/><stop offset=".45" stop-color="#a8a8a8"/><stop offset="1" stop-color="#7a7a7a"/></radialGradient></defs><path d="M11 1.5L14.41 7.81 21.46 9.1 16.52 14.29 17.47 21.4 11 18.3 4.53 21.4 5.48 14.29 .54 9.1 7.59 7.81z" fill="url(#sg)" stroke="#858585" stroke-width=".8" stroke-linejoin="round"/></svg>
<svg class="a" style="left:1355.6px;top:380px" width="22" height="23" viewBox="0 0 22 23"><defs><radialGradient id="sg" cx="50%" cy="60%" r="55%"><stop offset="0" stop-color="#f0f0f0"/><stop offset=".45" stop-color="#a8a8a8"/><stop offset="1" stop-color="#7a7a7a"/></radialGradient></defs><path d="M11 1.5L14.41 7.81 21.46 9.1 16.52 14.29 17.47 21.4 11 18.3 4.53 21.4 5.48 14.29 .54 9.1 7.59 7.81z" fill="url(#sg)" stroke="#858585" stroke-width=".8" stroke-linejoin="round"/></svg>
<svg class="a" style="left:1379.7px;top:380px" width="22" height="23" viewBox="0 0 22 23"><defs><radialGradient id="sg" cx="50%" cy="60%" r="55%"><stop offset="0" stop-color="#f0f0f0"/><stop offset=".45" stop-color="#a8a8a8"/><stop offset="1" stop-color="#7a7a7a"/></radialGradient></defs><path d="M11 1.5L14.41 7.81 21.46 9.1 16.52 14.29 17.47 21.4 11 18.3 4.53 21.4 5.48 14.29 .54 9.1 7.59 7.81z" fill="url(#sg)" stroke="#858585" stroke-width=".8" stroke-linejoin="round"/></svg>
<div class="t" style="left:1279px;top:418.3px;font-size:17px;color:#111;transform:scaleX(1.0492);transform-origin:0 0;">Title:</div>
<svg class="a" style="left:1903px;top:416.7px" width="10" height="7" viewBox="0 0 10 7"><path d="M1.5 5.5L5 1.5l3.5 4" stroke="#6a5ae0" stroke-width="2" fill="none"/></svg>
<div class="a" style="left:1904px;top:433.7px;width:8px;height:2px;background:#2a2a9a"></div>
<div class="a" style="left:1280px;top:440px;width:643px;height:29px;background:#fff;border:1px solid #8c8c8c;box-shadow:inset 0 0 0 0.5px #b0b0b0"></div>
<div class="t" style="left:1276px;top:475.4px;font-size:17px;color:#111;transform:scaleX(1.0590);transform-origin:0 0;">Artist:</div>
<svg class="a" style="left:1903px;top:475.2px" width="10" height="7" viewBox="0 0 10 7"><path d="M1.5 5.5L5 1.5l3.5 4" stroke="#6a5ae0" stroke-width="2" fill="none"/></svg>
<div class="a" style="left:1904px;top:492.2px;width:8px;height:2px;background:#2a2a9a"></div>
<div class="a" style="left:1280px;top:498px;width:643px;height:30px;background:#fff;border:1px solid #8c8c8c;box-shadow:inset 0 0 0 0.5px #b0b0b0"></div>
<div class="a" style="left:1298px;top:492px;width:71px;height:36px;background:#000"></div>
<svg class="a" style="left:1902px;top:510px" width="14" height="8" viewBox="0 0 14 8"><path d="M1 1l6 6 6-6" stroke="#555" stroke-width="1.5" fill="none"/></svg>
<div class="t" style="left:1277px;top:539.4px;font-size:17px;color:#111;transform:scaleX(0.9451);transform-origin:0 0;">Album:</div>
<svg class="a" style="left:1903px;top:539.6px" width="10" height="7" viewBox="0 0 10 7"><path d="M1.5 5.5L5 1.5l3.5 4" stroke="#6a5ae0" stroke-width="2" fill="none"/></svg>
<div class="a" style="left:1904px;top:556.6px;width:8px;height:2px;background:#2a2a9a"></div>
<div class="a" style="left:1280px;top:562px;width:643px;height:31px;background:#fff;border:1px solid #8c8c8c;box-shadow:inset 0 0 0 0.5px #b0b0b0"></div>
<div class="a" style="left:1298px;top:560px;width:77px;height:33.5px;background:#000"></div>
<svg class="a" style="left:1902px;top:574.5px" width="14" height="8" viewBox="0 0 14 8"><path d="M1 1l6 6 6-6" stroke="#555" stroke-width="1.5" fill="none"/></svg>
<div class="t" style="left:1274px;top:604.6px;font-size:17px;color:#111;transform:scaleX(0.8930);transform-origin:0 0;">Comment:</div>
<svg class="a" style="left:1903px;top:604.3px" width="10" height="7" viewBox="0 0 10 7"><path d="M1.5 5.5L5 1.5l3.5 4" stroke="#6a5ae0" stroke-width="2" fill="none"/></svg>
<div class="a" style="left:1904px;top:621.3px;width:8px;height:2px;background:#2a2a9a"></div>
<div class="a" style="left:1280px;top:628px;width:642px;height:114px;background:#fff;border-top:2px solid #707070;border-bottom:1px solid #e4e4e4;border-right:1px solid #e8e8e8"></div>
<div class="t" style="left:1262px;top:632.6px;font-size:17px;color:#111;transform:scaleX(0.8351);transform-origin:0 0;">www.arab.net</div>
<div class="t" style="left:4px;top:1649.4px;font-size:18px;color:#111;transform:scaleX(0.9241);transform-origin:0 0;">Done.</div>
<div class="a" style="left:0px;top:1674px;width:1936px;height:1px;background:#303828"></div>
<div class="a" style="left:1921px;top:1655px;width:2px;height:2px;background:#a0a0a0"></div>
<div class="a" style="left:1917px;top:1659px;width:2px;height:2px;background:#a0a0a0"></div>
<div class="a" style="left:1921px;top:1659px;width:2px;height:2px;background:#a0a0a0"></div>
<div class="a" style="left:1913px;top:1663px;width:2px;height:2px;background:#a0a0a0"></div>
<div class="a" style="left:1917px;top:1663px;width:2px;height:2px;background:#a0a0a0"></div>
<div class="a" style="left:1921px;top:1663px;width:2px;height:2px;background:#a0a0a0"></div>
<div class="a" style="left:27px;top:182px;width:78px;height:256px;background:#000"></div>
<div class="a" style="left:104px;top:182px;width:1199px;height:1026px;background:#f0f0f0;border:1px solid #5a5a5a;border-bottom-color:#e0e0e0;box-shadow:2px 5px 16px rgba(0,0,0,.28)"></div>
<div class="a" style="left:105px;top:183px;width:1197px;height:45px;background:#fff"></div>
<svg class="a" style="left:115px;top:190px" width="26" height="26" viewBox="0 0 26 26"><rect x="2" y="2" width="4.5" height="4" fill="#ee7a20"/><rect x="2" y="8" width="4.5" height="17.5" fill="#0a0a0a"/><path d="M6.5 2H13C19 2 21.5 7 21.5 13.5S18.5 25.5 12 25.5H2V21H12C15.5 21 17 17.5 17 13.5S15.5 6 12.5 6H6.5z" fill="#0a0a0a"/><text x="12.3" y="16.6" font-size="7" font-weight="bold" fill="#555" font-family="Liberation Sans" letter-spacing="-0.3">3v2</text></svg>
<div class="t" style="left:146.4px;top:196.4px;font-size:18px;color:#111;transform:scaleX(0.9839);transform-origin:0 0;">Full ID3V2 frames editor</div>
<div class="a" style="left:1119px;top:204px;width:17px;height:1px;background:#111"></div>
<div class="a" style="left:1189px;top:197px;width:16px;height:16px;border:1px solid #111"></div>
<svg class="a" style="left:1259px;top:196px" width="17" height="17" viewBox="0 0 17 17"><path d="M1 1L16 16M16 1L1 16" stroke="#111" stroke-width="1.3"/></svg>
<div class="a" style="left:109px;top:238px;width:291px;height:850px;border:1px solid #dcdcdc"></div>
<div class="a" style="left:116px;top:232px;width:54px;height:12px;background:#f0f0f0"></div>
<div class="t" style="left:118.6px;top:230.0px;font-size:16.5px;color:#111;transform:scaleX(0.8941);transform-origin:0 0;">Frames</div>
<div class="a" style="left:110px;top:253px;width:286px;height:830px;background:#fff;border:1px solid #828282"></div>
<svg class="a" style="left:118px;top:256px" width="24" height="24" viewBox="0 0 24 24"><path d="M5 2h10l5 5v15H5z" fill="#fafafa" stroke="#999"/><path d="M8 9h9M8 12h9M8 15h9M8 18h9" stroke="#ccc"/></svg>
<div class="t" style="left:152.5px;top:259.0px;font-size:19.5px;color:#111;transform:scaleX(1.0093);transform-origin:0 0;">All text frames</div>
<svg class="a" style="left:118px;top:283px" width="24" height="24" viewBox="0 0 24 24"><ellipse cx="7" cy="12" rx="6" ry="4.5" fill="#5a5a5a"/><ellipse cx="17" cy="12" rx="6" ry="4.5" fill="#5a5a5a"/><ellipse cx="7" cy="12" rx="3" ry="1.6" fill="#c8c8c8"/><ellipse cx="17" cy="12" rx="3" ry="1.6" fill="#c8c8c8"/><path d="M8 12h8" stroke="#333" stroke-width="1.5"/></svg>
<div class="t" style="left:152.5px;top:286.0px;font-size:19.5px;color:#111;transform:scaleX(0.9010);transform-origin:0 0;">URL Link</div>
<svg class="a" style="left:118px;top:310px" width="24" height="24" viewBox="0 0 24 24"><circle cx="12" cy="7" r="5" fill="#f0c8a0" stroke="#8a5a30"/><path d="M7 5c1-4 9-4 10 0z" fill="#8a4a20"/><path d="M2 23c0-7 4-10 10-10s10 3 10 10z" fill="#4a8ad0"/><path d="M11 13h2l1 6-2 2-2-2z" fill="#d03030"/></svg>
<div class="t" style="left:152.5px;top:313.0px;font-size:19.5px;color:#111;transform:scaleX(0.9810);transform-origin:0 0;">Involved people list</div>
<svg class="a" style="left:118px;top:337px" width="24" height="24" viewBox="0 0 24 24"><path d="M1 2h14c1 0 2 1 2 2v7c0 1-1 2-2 2H6l-4 4v-4c-1 0-1-1-1-2z" fill="#6a6a6a"/><path d="M8 8h14c1 0 1.5 1 1.5 2v7c0 1-.5 2-1.5 2h-7l-5 4v-4H8c-1 0-1.5-1-1.5-2v-7c0-1 .5-2 1.5-2z" fill="#eaeaea" stroke="#6a6a6a" stroke-width="1.6"/></svg>
<div class="t" style="left:152.5px;top:340.0px;font-size:19.5px;color:#111;transform:scaleX(0.9663);transform-origin:0 0;">Comments</div>
<svg class="a" style="left:118px;top:364px" width="24" height="24" viewBox="0 0 24 24"><rect x="1" y="1" width="15" height="14" fill="#9ac89a" stroke="#777"/><rect x="8" y="5" width="15" height="14" fill="#c8b0d8" stroke="#777"/><rect x="4" y="9" width="15" height="14" fill="#b0d0f0" stroke="#6a8ab0"/><rect x="9" y="14" width="5" height="4" fill="#4a7ac0"/></svg>
<div class="t" style="left:152.5px;top:367.0px;font-size:19.5px;color:#111;transform:scaleX(0.9862);transform-origin:0 0;">Attached pictures</div>
<svg class="a" style="left:118px;top:391px" width="24" height="24" viewBox="0 0 24 24"><path d="M12 1l3.2 7.2 7.8.7-6 5.2 1.8 7.7L12 17.8 5.2 21.8 7 14.1 1 8.9l7.8-.7z" fill="#f5c828" stroke="#6a6a50" stroke-width="1.2"/></svg>
<div class="t" style="left:152.5px;top:394.0px;font-size:19.5px;color:#111;transform:scaleX(0.9828);transform-origin:0 0;">Popularimeter</div>
<svg class="a" style="left:118px;top:418px" width="24" height="24" viewBox="0 0 24 24"><rect x="1" y="10" width="6.5" height="13" fill="#e85060" stroke="#a03040" stroke-width=".8"/><rect x="8" y="2" width="7.5" height="21" fill="#5a8ae0" stroke="#3a5aa0" stroke-width=".8"/><rect x="16" y="12" width="6.5" height="11" fill="#60b070" stroke="#3a7a4a" stroke-width=".8"/></svg>
<div class="t" style="left:152.5px;top:421.0px;font-size:19.5px;color:#111;transform:scaleX(0.9604);transform-origin:0 0;">Play counter</div>
<svg class="a" style="left:118px;top:445px" width="24" height="24" viewBox="0 0 24 24"><path d="M4 3h14l4 4-10 8H4l6-5H4z" fill="#c8c8d8" stroke="#888"/><path d="M8 19l6-6 3 3-6 6z" fill="#f0d040"/><path d="M3 22h8" stroke="#999"/></svg>
<div class="t" style="left:152.5px;top:448.0px;font-size:19.5px;color:#111;transform:scaleX(0.9586);transform-origin:0 0;">Unsychronised lyrics</div>
<svg class="a" style="left:118px;top:472px" width="24" height="24" viewBox="0 0 24 24"><rect x="5" y="1" width="16" height="22" fill="#fafafa" stroke="#a8a8a8"/><path d="M3 3h4M3 6h4M3 9h4M3 12h4M3 15h4M3 18h4M3 21h4" stroke="#d06030" stroke-width="1.6"/><rect x="9" y="5" width="9" height="2.2" fill="#5a90d8"/><rect x="9" y="9" width="9" height="2.2" fill="#7aa8e0"/><path d="M15 22l5-5" stroke="#b0b0b0" stroke-width="1.2"/></svg>
<div class="a" style="left:148px;top:471px;width:170px;height:27px;background:#0078d7"></div>
<div class="t" style="left:152.5px;top:475.0px;font-size:19.5px;color:#fff;transform:scaleX(0.9704);transform-origin:0 0;">Synchronised lyrics</div>
<svg class="a" style="left:118px;top:499px" width="24" height="24" viewBox="0 0 24 24"><path d="M4 1h16v3l-6 8 6 8v3H4v-3l6-8-6-8z" fill="#f4f4f4" stroke="#777" stroke-width="1.5"/><path d="M6 2h12l-6 6z" fill="#e0b070"/></svg>
<div class="t" style="left:152.5px;top:502.0px;font-size:19.5px;color:#111;transform:scaleX(0.9693);transform-origin:0 0;">Event timing codes</div>
<svg class="a" style="left:118px;top:526px" width="24" height="24" viewBox="0 0 24 24"><path d="M5 2h10l5 5v15H5z" fill="#f6f6f6" stroke="#999"/><circle cx="10" cy="13" r="7" fill="#dfe8f4" stroke="#999"/><circle cx="10" cy="13" r="1.5" fill="#999"/></svg>
<div class="t" style="left:152.5px;top:529.0px;font-size:19.5px;color:#111;transform:scaleX(0.9909);transform-origin:0 0;">Unique file identifier</div>
<svg class="a" style="left:118px;top:553px" width="24" height="24" viewBox="0 0 24 24"><circle cx="12" cy="12" r="10.5" fill="#c8d8f0" stroke="#777" stroke-width="1.5"/><circle cx="12" cy="12" r="3" fill="#fff" stroke="#666"/></svg>
<div class="t" style="left:152.5px;top:556.0px;font-size:19.5px;color:#111;transform:scaleX(0.9607);transform-origin:0 0;">Music CD identifier</div>
<svg class="a" style="left:118px;top:580px" width="24" height="24" viewBox="0 0 24 24"><path d="M2 2h9l4 4v12H2z" fill="#f8f8f8" stroke="#999"/><path d="M8 6h9l5 5v12H8z" fill="#fafafa" stroke="#999"/></svg>
<div class="t" style="left:152.5px;top:583.0px;font-size:19.5px;color:#111;transform:scaleX(0.9688);transform-origin:0 0;">General encapsulated object</div>
<svg class="a" style="left:118px;top:607px" width="24" height="24" viewBox="0 0 24 24"><path d="M16 6c-1-3-9-3-9 1s9 3 9 8-8 5-9 1M11 2v22" stroke="#5a9a5a" stroke-width="2.5" fill="none"/></svg>
<div class="t" style="left:152.5px;top:610.0px;font-size:19.5px;color:#111;transform:scaleX(0.9643);transform-origin:0 0;">Commercial</div>
<svg class="a" style="left:118px;top:634px" width="24" height="24" viewBox="0 0 24 24"><path d="M12 1v22M1 12h22M4 4l16 16M20 4L4 20" stroke="#f0d040" stroke-width="3"/></svg>
<div class="t" style="left:152.5px;top:637.0px;font-size:19.5px;color:#111;transform:scaleX(1.0032);transform-origin:0 0;">Terms of use</div>
<svg class="a" style="left:117px;top:662px" width="26" height="26" viewBox="0 0 26 26"><rect x="2" y="2" width="4.5" height="4" fill="#ee7a20"/><rect x="2" y="8" width="4.5" height="17.5" fill="#0a0a0a"/><path d="M6.5 2H13C19 2 21.5 7 21.5 13.5S18.5 25.5 12 25.5H2V21H12C15.5 21 17 17.5 17 13.5S15.5 6 12.5 6H6.5z" fill="#0a0a0a"/><text x="12.3" y="16.6" font-size="7" font-weight="bold" fill="#555" font-family="Liberation Sans" letter-spacing="-0.3">3v2</text></svg>
<div class="t" style="left:152.5px;top:664.0px;font-size:19.5px;color:#111;transform:scaleX(1.0055);transform-origin:0 0;">Tag explorer</div>
<div class="a" style="left:395px;top:578px;width:12px;height:26px;background:#f0f0f0;border-left:1px solid #828282"></div>
<div class="a" style="left:399px;top:578px;width:1px;height:26px;background:#dcdcdc"></div>
<div class="a" style="left:111px;top:1056px;width:284px;height:23px;background:#f0f0f0"></div>
<div class="a" style="left:138px;top:1057px;width:148px;height:21px;background:#cdcdcd"></div>
<svg class="a" style="left:119px;top:1061px" width="10" height="12" viewBox="0 0 10 12"><path d="M8 1L2 6l6 5" stroke="#555" stroke-width="2" fill="none"/></svg>
<svg class="a" style="left:376px;top:1061px" width="10" height="12" viewBox="0 0 10 12"><path d="M2 1l6 5-6 5" stroke="#555" stroke-width="2" fill="none"/></svg>
<div class="a" style="left:407px;top:238px;width:894px;height:848px;border:1px solid #dcdcdc;border-right:none"></div>
<div class="a" style="left:414px;top:230px;width:144px;height:14px;background:#f0f0f0"></div>
<div class="t" style="left:420.5px;top:229.3px;font-size:17.8px;color:#111;transform:scaleX(0.8698);transform-origin:0 0;">Synchronised lyrics</div>
<div class="a" style="left:413px;top:252px;width:885px;height:36px;background:linear-gradient(#fcfcfc,#f3f3f3);border-top-right-radius:4px"></div>
<div class="a" style="left:1296px;top:264px;width:1px;height:22px;background:#c8c8c8"></div>
<svg class="a" style="left:415px;top:258px" width="24" height="24" viewBox="0 0 24 24"><rect x="1.5" y="1.5" width="21" height="21" rx="2" fill="#c0c0c0" stroke="#a8a8a8"/><rect x="6" y="2.5" width="12" height="6.5" fill="#ececec"/><rect x="8" y="3.5" width="1.5" height="4" fill="#a8a8a8"/><rect x="5" y="13" width="14" height="8" fill="#ececec"/><rect x="6" y="14.5" width="12" height="5" fill="#d4d4d4"/><path d="M6 16.5h12" stroke="#ececec" stroke-width=".6"/></svg>
<svg class="a" style="left:449px;top:258px" width="24" height="24" viewBox="0 0 24 24"><path d="M5 11c.5-3 3-5 6.5-5H17" stroke="#3ad040" stroke-width="2.6" fill="none" stroke-linecap="round"/><path d="M15 2.5l4 3.5-4 3.5z" fill="#3ad040"/><path d="M19 13c-.5 3-3 5-6.5 5H7" stroke="#3ad040" stroke-width="2.6" fill="none" stroke-linecap="round"/><path d="M9 14.5L5 18l4 3.5z" fill="#3ad040"/></svg>
<div class="a" style="left:484px;top:259px;width:1px;height:24px;background:#c8c8c8"></div>
<svg class="a" style="left:494px;top:258px" width="24" height="24" viewBox="0 0 24 24"><circle cx="12" cy="12" r="9.5" fill="#5ac05a" stroke="#3a903a" stroke-width="1.5"/><path d="M7 12h10M12 7v10" stroke="#fff" stroke-width="2.5"/></svg>
<svg class="a" style="left:528px;top:258px" width="24" height="24" viewBox="0 0 24 24"><path d="M5 5L19 19M19 5L5 19" stroke="#e8344c" stroke-width="4.2" stroke-linecap="round"/></svg>
<svg class="a" style="left:562px;top:258px" width="24" height="24" viewBox="0 0 24 24"><path d="M3 3h9l3 3v12H3z" fill="#fafafa" stroke="#bbb"/><path d="M9 7h9l3 3v13H9z" fill="#fafafa" stroke="#bbb"/></svg>
<div class="a" style="left:594px;top:254px;width:282px;height:32px;background:#fff"></div>
<div class="t" style="left:600.6px;top:261.8px;font-size:17.8px;color:#111;transform:scaleX(0.9674);transform-origin:0 0;">ARA [ARA]</div>
<svg class="a" style="left:879px;top:267px" width="10" height="6" viewBox="0 0 10 6"><path d="M0 0h10l-5 6z" fill="#222"/></svg>
<div class="a" style="left:900px;top:259px;width:1px;height:24px;background:#c8c8c8"></div>
<svg class="a" style="left:908px;top:258px" width="26" height="24" viewBox="0 0 26 24"><path d="M1 8h8l2 2h12v12H1z" fill="#f0c050" stroke="#c89030"/><rect x="11" y="1" width="10" height="11" fill="#fff" stroke="#7a9ac8"/><path d="M1 13h22l-3 9H1z" fill="#f8d878"/></svg>
<svg class="a" style="left:943px;top:258px" width="26" height="24" viewBox="0 0 26 24"><path d="M3 2h10l4 4v16H3z" fill="#fff" stroke="#7a9ac8"/><rect x="9" y="10" width="14" height="13" fill="#4a7ac8"/><rect x="12" y="11" width="8" height="4" fill="#fff"/><rect x="11" y="18" width="10" height="4" fill="#8ac8e0"/></svg>
<div class="a" style="left:978px;top:259px;width:1px;height:24px;background:#c8c8c8"></div>
<svg class="a" style="left:987px;top:258px" width="24" height="24" viewBox="0 0 24 24"><rect x="2" y="3" width="20" height="14" fill="#6a8ab8" stroke="#556"/><rect x="4" y="5" width="16" height="10" fill="#a8c8f0"/><rect x="9" y="17" width="6" height="3" fill="#888"/><rect x="6" y="20" width="12" height="2" fill="#999"/></svg>
<div class="t" style="left:419.7px;top:290.5px;font-size:17.8px;color:#111;transform:scaleX(0.8867);transform-origin:0 0;">Content descriptor:</div>
<div class="a" style="left:415px;top:314px;width:878px;height:29px;background:#fff;border:1px solid #7a7a7a"></div>
<div class="t" style="left:420.5px;top:319.1px;font-size:17.8px;color:#111;transform:scaleX(0.8767);transform-origin:0 0;">ARA</div>
<div class="t" style="left:419.7px;top:349.7px;font-size:17.8px;color:#111;transform:scaleX(0.9126);transform-origin:0 0;">Language:</div>
<div class="a" style="left:415px;top:372px;width:878px;height:32px;background:#e5e5e5;border:1px solid #adadad"></div>
<div class="t" style="left:421px;top:378.9px;font-size:17.8px;color:#111;transform:scaleX(0.8956);transform-origin:0 0;">Arabic [ara]</div>
<svg class="a" style="left:1272px;top:384px" width="14" height="8" viewBox="0 0 14 8"><path d="M1 1l6 6 6-6" stroke="#555" stroke-width="1.5" fill="none"/></svg>
<div class="t" style="left:419.7px;top:409.4px;font-size:17.8px;color:#111;transform:scaleX(0.8899);transform-origin:0 0;">Content type:</div>
<div class="a" style="left:415px;top:432px;width:878px;height:32px;background:#e5e5e5;border:1px solid #adadad"></div>
<div class="t" style="left:421px;top:438.9px;font-size:17.8px;color:#111;transform:scaleX(0.8755);transform-origin:0 0;">Lyrics</div>
<svg class="a" style="left:1272px;top:444px" width="14" height="8" viewBox="0 0 14 8"><path d="M1 1l6 6 6-6" stroke="#555" stroke-width="1.5" fill="none"/></svg>
<svg class="a" style="left:415px;top:476px" width="22" height="22" viewBox="0 0 22 22"><circle cx="11" cy="11" r="9" fill="#70c070" stroke="#4a9a4a" stroke-width="1.5"/><path d="M6 11h10M11 6v10" stroke="#fff" stroke-width="2.5"/></svg>
<div class="t" style="left:441.4px;top:478.3px;font-size:18.5px;color:#2323d8;transform:scaleX(0.9947);transform-origin:0 0;text-decoration:underline">Add here (CTRL + Space)</div>
<svg class="a" style="left:690px;top:475px" width="24" height="24" viewBox="0 0 24 24"><path d="M5 5L19 19M19 5L5 19" stroke="#e8344c" stroke-width="4.2" stroke-linecap="round"/></svg>
<div class="t" style="left:718.8px;top:478.3px;font-size:18.5px;color:#2323d8;transform:scaleX(1.0181);transform-origin:0 0;text-decoration:underline">Delete selected (Del)</div>
<svg class="a" style="left:932px;top:475px" width="22" height="24" viewBox="0 0 22 24"><path d="M3 4v16c0 2 16 2 16 0V4z" fill="#e8e4d8" stroke="#c8c0b0"/><ellipse cx="11" cy="4" rx="8" ry="2.5" fill="#f4f0e8" stroke="#c8c0b0"/></svg>
<div class="t" style="left:961.8px;top:478.3px;font-size:18.5px;color:#2323d8;transform:scaleX(0.8875);transform-origin:0 0;text-decoration:underline">Clear all</div>
<div class="a" style="left:411px;top:504px;width:887px;height:357px;background:#fff;border:2px solid #3a3a3a;border-bottom:none"></div>
<div class="a" style="left:413px;top:535px;width:857px;height:1px;background:#a0a0a0"></div>
<div class="a" style="left:473px;top:506px;width:1px;height:354px;background:#a0a0a0"></div>
<div class="a" style="left:872px;top:506px;width:1px;height:354px;background:#a0a0a0"></div>
<div class="t" style="left:485px;top:513.0px;font-size:17.5px;color:#111;transform:scaleX(0.8631);transform-origin:0 0;">Time</div>
<div class="t" style="left:884.2px;top:513.0px;font-size:17.5px;color:#111;transform:scaleX(0.9098);transform-origin:0 0;">Text</div>
<div class="a" style="left:413px;top:536px;width:60px;height:33px;background:#bcdcf4"></div>
<div class="a" style="left:473px;top:536px;width:797px;height:33px;background:#0078d7"></div>
<svg class="a" style="left:422px;top:546px" width="10" height="16" viewBox="0 0 10 16"><path d="M1 1l8 7-8 7z" fill="#3a4450"/></svg>
<div class="t" style="left:478.9px;top:544.5px;font-size:17.5px;color:#fff;transform:scaleX(0.9116);transform-origin:0 0;">21,765</div>
<div class="a" style="left:872px;top:541px;width:238px;height:28px;background:#000"></div>
<div class="t" style="left:478.9px;top:577.4px;font-size:17.5px;color:#111;transform:scaleX(0.9116);transform-origin:0 0;">24,342</div>
<div class="a" style="left:413px;top:569px;width:857px;height:1px;background:#a0a0a0"></div>
<div class="a" style="left:861px;top:573px;width:185px;height:29px;background:#000"></div>
<div class="t" style="left:478.9px;top:610.3px;font-size:17.5px;color:#111;transform:scaleX(0.9116);transform-origin:0 0;">27,057</div>
<div class="a" style="left:413px;top:602px;width:857px;height:1px;background:#a0a0a0"></div>
<div class="a" style="left:865px;top:608px;width:170px;height:23px;background:#000"></div>
<div class="t" style="left:478.9px;top:643.2px;font-size:17.5px;color:#111;transform:scaleX(0.9116);transform-origin:0 0;">29,862</div>
<div class="a" style="left:413px;top:635px;width:857px;height:1px;background:#a0a0a0"></div>
<div class="a" style="left:868px;top:637px;width:153px;height:28px;background:#000"></div>
<div class="t" style="left:478.9px;top:676.1px;font-size:17.5px;color:#111;transform:scaleX(0.9116);transform-origin:0 0;">32,378</div>
<div class="a" style="left:413px;top:668px;width:857px;height:1px;background:#a0a0a0"></div>
<div class="a" style="left:860px;top:674px;width:173px;height:24px;background:#000"></div>
<div class="t" style="left:478.9px;top:709.0px;font-size:17.5px;color:#111;transform:scaleX(0.9116);transform-origin:0 0;">34,955</div>
<div class="a" style="left:413px;top:700px;width:857px;height:1px;background:#a0a0a0"></div>
<div class="a" style="left:859px;top:705px;width:168px;height:23px;background:#000"></div>
<div class="t" style="left:478.9px;top:741.9px;font-size:17.5px;color:#111;transform:scaleX(0.9116);transform-origin:0 0;">37,670</div>
<div class="a" style="left:413px;top:733px;width:857px;height:1px;background:#a0a0a0"></div>
<div class="a" style="left:838px;top:739px;width:198px;height:23px;background:#000"></div>
<div class="t" style="left:478.9px;top:774.8px;font-size:17.5px;color:#111;transform:scaleX(0.9116);transform-origin:0 0;">40,475</div>
<div class="a" style="left:413px;top:766px;width:857px;height:1px;background:#a0a0a0"></div>
<div class="a" style="left:851px;top:773px;width:141px;height:22px;background:#000"></div>
<div class="t" style="left:478.9px;top:807.7px;font-size:17.5px;color:#111;transform:scaleX(0.9116);transform-origin:0 0;">42,804</div>
<div class="a" style="left:413px;top:799px;width:857px;height:1px;background:#a0a0a0"></div>
<div class="a" style="left:843px;top:803px;width:230px;height:27px;background:#000"></div>
<div class="t" style="left:478.9px;top:840.6px;font-size:17.5px;color:#111;transform:scaleX(0.9116);transform-origin:0 0;">45,255</div>
<div class="a" style="left:413px;top:832px;width:857px;height:1px;background:#a0a0a0"></div>
<div class="a" style="left:856px;top:839px;width:175px;height:21px;background:#000"></div>
<div class="a" style="left:1270px;top:506px;width:26px;height:354px;background:#f0f0f0"></div>
<svg class="a" style="left:1276px;top:513px" width="14" height="9" viewBox="0 0 14 9"><path d="M1 8l6-6 6 6" stroke="#555" stroke-width="1.8" fill="none"/></svg>
<div class="a" style="left:1273px;top:530px;width:20px;height:85px;background:#cdcdcd"></div>
<div class="a" style="left:411px;top:860px;width:887px;height:46px;background:#778899"></div>
<div class="t" style="left:415px;top:870.6px;font-size:15.5px;color:#f0f4f8;transform:scaleX(0.9971);transform-origin:0 0;">00.000</div>
<div class="a" style="left:411px;top:873px;width:2px;height:2px;background:#e8eef4"></div>
<div class="a" style="left:411px;top:880px;width:2px;height:2px;background:#e8eef4"></div>
<div class="t" style="left:516.6px;top:870.6px;font-size:15.5px;color:#f0f4f8;transform:scaleX(1.0600);transform-origin:0 0;">00:00:01.000</div>
<div class="t" style="left:666.6px;top:870.6px;font-size:15.5px;color:#f0f4f8;transform:scaleX(1.0600);transform-origin:0 0;">00:00:02.000</div>
<div class="t" style="left:816.6px;top:870.6px;font-size:15.5px;color:#f0f4f8;transform:scaleX(1.0600);transform-origin:0 0;">00:00:03.000</div>
<div class="t" style="left:966.6px;top:870.6px;font-size:15.5px;color:#f0f4f8;transform:scaleX(1.0600);transform-origin:0 0;">00:00:04.000</div>
<div class="t" style="left:1116.6px;top:870.6px;font-size:15.5px;color:#f0f4f8;transform:scaleX(1.0600);transform-origin:0 0;">00:00:05.000</div>
<div class="a" style="left:426px;top:896px;width:2px;height:9px;background:#fff"></div>
<div class="a" style="left:441px;top:896px;width:2px;height:9px;background:#fff"></div>
<div class="a" style="left:456px;top:896px;width:2px;height:9px;background:#fff"></div>
<div class="a" style="left:471px;top:896px;width:2px;height:9px;background:#fff"></div>
<div class="a" style="left:486px;top:896px;width:2px;height:9px;background:#fff"></div>
<div class="a" style="left:501px;top:896px;width:2px;height:9px;background:#fff"></div>
<div class="a" style="left:516px;top:896px;width:2px;height:9px;background:#fff"></div>
<div class="a" style="left:531px;top:896px;width:2px;height:9px;background:#fff"></div>
<div class="a" style="left:546px;top:896px;width:2px;height:9px;background:#fff"></div>
<div class="a" style="left:561px;top:890px;width:2px;height:15px;background:#fff"></div>
<div class="a" style="left:576px;top:896px;width:2px;height:9px;background:#fff"></div>
<div class="a" style="left:591px;top:896px;width:2px;height:9px;background:#fff"></div>
<div class="a" style="left:606px;top:896px;width:2px;height:9px;background:#fff"></div>
<div class="a" style="left:621px;top:896px;width:2px;height:9px;background:#fff"></div>
<div class="a" style="left:636px;top:896px;width:2px;height:9px;background:#fff"></div>
<div class="a" style="left:651px;top:896px;width:2px;height:9px;background:#fff"></div>
<div class="a" style="left:666px;top:896px;width:2px;height:9px;background:#fff"></div>
<div class="a" style="left:681px;top:896px;width:2px;height:9px;background:#fff"></div>
<div class="a" style="left:696px;top:896px;width:2px;height:9px;background:#fff"></div>
<div class="a" style="left:711px;top:890px;width:2px;height:15px;background:#fff"></div>
<div class="a" style="left:726px;top:896px;width:2px;height:9px;background:#fff"></div>
<div class="a" style="left:741px;top:896px;width:2px;height:9px;background:#fff"></div>
<div class="a" style="left:756px;top:896px;width:2px;height:9px;background:#fff"></div>
<div class="a" style="left:771px;top:896px;width:2px;height:9px;background:#fff"></div>
<div class="a" style="left:786px;top:896px;width:2px;height:9px;background:#fff"></div>
<div class="a" style="left:801px;top:896px;width:2px;height:9px;background:#fff"></div>
<div class="a" style="left:816px;top:896px;width:2px;height:9px;background:#fff"></div>
<div class="a" style="left:831px;top:896px;width:2px;height:9px;background:#fff"></div>
<div class="a" style="left:846px;top:896px;width:2px;height:9px;background:#fff"></div>
<div class="a" style="left:861px;top:890px;width:2px;height:15px;background:#fff"></div>
<div class="a" style="left:876px;top:896px;width:2px;height:9px;background:#fff"></div>
<div class="a" style="left:891px;top:896px;width:2px;height:9px;background:#fff"></div>
<div class="a" style="left:906px;top:896px;width:2px;height:9px;background:#fff"></div>
<div class="a" style="left:921px;top:896px;width:2px;height:9px;background:#fff"></div>
<div class="a" style="left:936px;top:896px;width:2px;height:9px;background:#fff"></div>
<div class="a" style="left:951px;top:896px;width:2px;height:9px;background:#fff"></div>
<div class="a" style="left:966px;top:896px;width:2px;height:9px;background:#fff"></div>
<div class="a" style="left:981px;top:896px;width:2px;height:9px;background:#fff"></div>
<div class="a" style="left:996px;top:896px;width:2px;height:9px;background:#fff"></div>
<div class="a" style="left:1011px;top:890px;width:2px;height:15px;background:#fff"></div>
<div class="a" style="left:1026px;top:896px;width:2px;height:9px;background:#fff"></div>
<div class="a" style="left:1041px;top:896px;width:2px;height:9px;background:#fff"></div>
<div class="a" style="left:1056px;top:896px;width:2px;height:9px;background:#fff"></div>
<div class="a" style="left:1071px;top:896px;width:2px;height:9px;background:#fff"></div>
<div class="a" style="left:1086px;top:896px;width:2px;height:9px;background:#fff"></div>
<div class="a" style="left:1101px;top:896px;width:2px;height:9px;background:#fff"></div>
<div class="a" style="left:1116px;top:896px;width:2px;height:9px;background:#fff"></div>
<div class="a" style="left:1131px;top:896px;width:2px;height:9px;background:#fff"></div>
<div class="a" style="left:1146px;top:896px;width:2px;height:9px;background:#fff"></div>
<div class="a" style="left:1161px;top:890px;width:2px;height:15px;background:#fff"></div>
<div class="a" style="left:1176px;top:896px;width:2px;height:9px;background:#fff"></div>
<div class="a" style="left:1191px;top:896px;width:2px;height:9px;background:#fff"></div>
<div class="a" style="left:1206px;top:896px;width:2px;height:9px;background:#fff"></div>
<div class="a" style="left:1221px;top:896px;width:2px;height:9px;background:#fff"></div>
<div class="a" style="left:1236px;top:896px;width:2px;height:9px;background:#fff"></div>
<div class="a" style="left:1251px;top:896px;width:2px;height:9px;background:#fff"></div>
<div class="a" style="left:1266px;top:896px;width:2px;height:9px;background:#fff"></div>
<div class="a" style="left:1281px;top:896px;width:2px;height:9px;background:#fff"></div>
<div class="a" style="left:411px;top:905px;width:887px;height:2px;background:#111"></div>
<div class="a" style="left:411px;top:907px;width:887px;height:20px;background:#3cb371"></div>
<div class="a" style="left:411px;top:927px;width:887px;height:38px;background:#66cdaa"></div>
<div class="a" style="left:411px;top:964px;width:887px;height:2px;background:#111"></div>
<div class="a" style="left:411px;top:966px;width:887px;height:9px;background:#b0c4de"></div>
<div class="a" style="left:411px;top:860px;width:2px;height:115px;background:#2020c0"></div>
<svg class="a" style="left:413px;top:903px" width="64" height="24" viewBox="0 0 64 24"><g stroke="#1a2a1a" stroke-width="1.6" fill="none" stroke-linecap="round"><path d="M3 17c-2-3 1-6 3-4s1 4-1 4h5c1 0 2-1 2-2"/><path d="M13 6v11"/><path d="M24 9v5c0 3 4 3 9 3h1c2 0 2-2 2-4"/><path d="M29 7l4 3"/><path d="M37 12c0 4-2 6-4 7"/><path d="M40 6v11"/><path d="M42 17h7c1 0 2-1 2-3M49 17h7c2 0 2-2 2-4"/><path d="M60 4v13"/></g><g fill="#1a2a1a"><circle cx="46" cy="21" r="1.2"/><circle cx="53" cy="9" r="1.2"/><circle cx="7" cy="21" r="1"/><circle cx="10" cy="21" r="1"/><path d="M58 1h4v2h-4z"/></g></svg>
<div class="t" style="left:475.5px;top:906.5px;font-size:17px;color:#1a2a1a;transform:scaleX(1.1249);transform-origin:0 0;">.mp3</div>
<svg class="a" style="left:418px;top:981px" width="10" height="13" viewBox="0 0 10 13"><path d="M8 1L2 6.5l6 5.5" stroke="#444" stroke-width="2" fill="none"/></svg>
<div class="a" style="left:438px;top:976px;width:24px;height:22px;background:#d6d6d6"></div>
<svg class="a" style="left:1124px;top:981px" width="10" height="13" viewBox="0 0 10 13"><path d="M2 1l6 5.5-6 5.5" stroke="#444" stroke-width="2" fill="none"/></svg>
<div class="a" style="left:1150px;top:985px;width:130px;height:3px;background:#dedede;border-radius:2px"></div>
<svg class="a" style="left:1270px;top:978px" width="14" height="20" viewBox="0 0 14 20"><path d="M1 1h12v13l-6 5-6-5z" fill="#0a6ad0"/></svg>
<div class="a" style="left:411px;top:1001px;width:887px;height:35px;background:#778899"></div>
<div class="a" style="left:411px;top:1001px;width:2px;height:35px;background:#2020c0"></div>
<div class="t" style="left:416px;top:1008.9px;font-size:15.5px;color:#e8eef4;">0</div>
<div class="t" style="left:547.6px;top:1008.7px;font-size:15.5px;color:#f0f4f8;transform:scaleX(1.0523);transform-origin:0 0;">00:00:57.120</div>
<div class="t" style="left:727.6px;top:1008.7px;font-size:15.5px;color:#f0f4f8;transform:scaleX(1.0523);transform-origin:0 0;">00:01:54.240</div>
<div class="t" style="left:907.6px;top:1008.7px;font-size:15.5px;color:#f0f4f8;transform:scaleX(1.0523);transform-origin:0 0;">00:02:51.360</div>
<div class="t" style="left:1087.6px;top:1008.7px;font-size:15.5px;color:#f0f4f8;transform:scaleX(1.0523);transform-origin:0 0;">00:03:48.480</div>
<div class="a" style="left:429px;top:1031px;width:2px;height:5px;background:#fff"></div>
<div class="a" style="left:447px;top:1031px;width:2px;height:5px;background:#fff"></div>
<div class="a" style="left:465px;top:1031px;width:2px;height:5px;background:#fff"></div>
<div class="a" style="left:483px;top:1031px;width:2px;height:5px;background:#fff"></div>
<div class="a" style="left:501px;top:1031px;width:2px;height:5px;background:#fff"></div>
<div class="a" style="left:519px;top:1031px;width:2px;height:5px;background:#fff"></div>
<div class="a" style="left:537px;top:1031px;width:2px;height:5px;background:#fff"></div>
<div class="a" style="left:555px;top:1031px;width:2px;height:5px;background:#fff"></div>
<div class="a" style="left:573px;top:1031px;width:2px;height:5px;background:#fff"></div>
<div class="a" style="left:591px;top:1028px;width:2px;height:8px;background:#fff"></div>
<div class="a" style="left:609px;top:1031px;width:2px;height:5px;background:#fff"></div>
<div class="a" style="left:627px;top:1031px;width:2px;height:5px;background:#fff"></div>
<div class="a" style="left:645px;top:1031px;width:2px;height:5px;background:#fff"></div>
<div class="a" style="left:663px;top:1031px;width:2px;height:5px;background:#fff"></div>
<div class="a" style="left:681px;top:1031px;width:2px;height:5px;background:#fff"></div>
<div class="a" style="left:699px;top:1031px;width:2px;height:5px;background:#fff"></div>
<div class="a" style="left:717px;top:1031px;width:2px;height:5px;background:#fff"></div>
<div class="a" style="left:735px;top:1031px;width:2px;height:5px;background:#fff"></div>
<div class="a" style="left:753px;top:1031px;width:2px;height:5px;background:#fff"></div>
<div class="a" style="left:771px;top:1028px;width:2px;height:8px;background:#fff"></div>
<div class="a" style="left:789px;top:1031px;width:2px;height:5px;background:#fff"></div>
<div class="a" style="left:807px;top:1031px;width:2px;height:5px;background:#fff"></div>
<div class="a" style="left:825px;top:1031px;width:2px;height:5px;background:#fff"></div>
<div class="a" style="left:843px;top:1031px;width:2px;height:5px;background:#fff"></div>
<div class="a" style="left:861px;top:1031px;width:2px;height:5px;background:#fff"></div>
<div class="a" style="left:879px;top:1031px;width:2px;height:5px;background:#fff"></div>
<div class="a" style="left:897px;top:1031px;width:2px;height:5px;background:#fff"></div>
<div class="a" style="left:915px;top:1031px;width:2px;height:5px;background:#fff"></div>
<div class="a" style="left:933px;top:1031px;width:2px;height:5px;background:#fff"></div>
<div class="a" style="left:951px;top:1028px;width:2px;height:8px;background:#fff"></div>
<div class="a" style="left:969px;top:1031px;width:2px;height:5px;background:#fff"></div>
<div class="a" style="left:987px;top:1031px;width:2px;height:5px;background:#fff"></div>
<div class="a" style="left:1005px;top:1031px;width:2px;height:5px;background:#fff"></div>
<div class="a" style="left:1023px;top:1031px;width:2px;height:5px;background:#fff"></div>
<div class="a" style="left:1041px;top:1031px;width:2px;height:5px;background:#fff"></div>
<div class="a" style="left:1059px;top:1031px;width:2px;height:5px;background:#fff"></div>
<div class="a" style="left:1077px;top:1031px;width:2px;height:5px;background:#fff"></div>
<div class="a" style="left:1095px;top:1031px;width:2px;height:5px;background:#fff"></div>
<div class="a" style="left:1113px;top:1031px;width:2px;height:5px;background:#fff"></div>
<div class="a" style="left:1131px;top:1028px;width:2px;height:8px;background:#fff"></div>
<div class="a" style="left:1149px;top:1031px;width:2px;height:5px;background:#fff"></div>
<div class="a" style="left:1167px;top:1031px;width:2px;height:5px;background:#fff"></div>
<div class="a" style="left:1185px;top:1031px;width:2px;height:5px;background:#fff"></div>
<div class="a" style="left:1203px;top:1031px;width:2px;height:5px;background:#fff"></div>
<div class="a" style="left:1221px;top:1031px;width:2px;height:5px;background:#fff"></div>
<div class="a" style="left:1239px;top:1031px;width:2px;height:5px;background:#fff"></div>
<div class="a" style="left:1257px;top:1031px;width:2px;height:5px;background:#fff"></div>
<div class="a" style="left:1275px;top:1031px;width:2px;height:5px;background:#fff"></div>
<div class="a" style="left:417px;top:1046px;width:83px;height:31px;background:#e1e1e1;border:1px solid #adadad"></div>
<div class="a" style="left:513px;top:1046px;width:49px;height:31px;background:#e1e1e1;border:1px solid #adadad"></div>
<div class="a" style="left:575px;top:1046px;width:49px;height:31px;background:#e1e1e1;border:1px solid #adadad"></div>
<svg class="a" style="left:417px;top:1046px" width="210" height="31" viewBox="0 0 210 31"><circle cx="42" cy="15.5" r="8.5" fill="#fafafa" stroke="#c8c8c8"/><path d="M40 10.5l6 5-6 5z" fill="#555"/><circle cx="120" cy="15.5" r="8.5" fill="#fafafa" stroke="#c8c8c8"/><path d="M121 11.5l-5 4 5 4zM126 11.5l-5 4 5 4z" fill="#555"/><circle cx="182" cy="15.5" r="8.5" fill="#fafafa" stroke="#c8c8c8"/><path d="M176 11.5l5 4-5 4zM181 11.5l5 4-5 4z" fill="#555"/></svg>
<div class="t" style="left:643.5px;top:1043.1px;font-size:17px;color:#111;transform:scaleX(0.9473);transform-origin:0 0;">00:00:00.000</div>
<div class="t" style="left:643.5px;top:1062.6px;font-size:17px;color:#111;transform:scaleX(0.9473);transform-origin:0 0;">00:04:31.464</div>
<div class="a" style="left:1105px;top:1060px;width:122px;height:3px;background:#dcdcdc;border-radius:2px"></div>
<svg class="a" style="left:1212px;top:1049px" width="16" height="25" viewBox="0 0 16 25"><path d="M1 1h14v16l-7 7-7-7z" fill="#0a6ad0"/></svg>
<div class="a" style="left:1242px;top:1046px;width:49px;height:31px;background:#e1e1e1;border:1px solid #adadad"></div>
<svg class="a" style="left:1254px;top:1053px" width="25" height="18" viewBox="0 0 25 18"><path d="M0 5h5l6-5v18l-6-5H0z" fill="#7a7a7a"/><path d="M5 5l6-5v18l-6-5z" fill="#5e5e5e"/><circle cx="14" cy="9" r="1.6" fill="#e83a5a"/><path d="M17 5c2 2.3 2 5.7 0 8M20.5 2.5c3 3.5 3 9.5 0 13" stroke="#e02050" stroke-width="2.2" fill="none"/></svg>
<div class="t" style="left:114.4px;top:1089.7px;font-size:17.5px;color:#111;transform:scaleX(0.8752);transform-origin:0 0;">File path:</div>
<div class="a" style="left:110px;top:1112px;width:1188px;height:30px;background:#efefef;border:1px solid #8a8a8a"></div>
<div class="a" style="left:115px;top:1116px;width:364px;height:23px;background:#000"></div>
<div class="a" style="left:125px;top:1157px;width:109px;height:32px;background:#cccccc"></div>
<div class="t" style="left:169px;top:1166.5px;font-size:16px;color:#a0a0a0;">&lt;&lt;</div>
<div class="a" style="left:246px;top:1157px;width:109px;height:32px;background:#cccccc"></div>
<div class="t" style="left:290px;top:1166.5px;font-size:16px;color:#a0a0a0;">&gt;&gt;</div>
<div class="t" style="left:369.5px;top:1165.5px;font-size:17.8px;color:#111;transform:scaleX(0.8966);transform-origin:0 0;">Edit 1 of 1 file(s), 1 pending to save.</div>
<div class="a" style="left:1051px;top:1157px;width:110px;height:31px;background:#e1e1e1;border:1px solid #adadad"></div>
<div class="t" style="left:1079.2px;top:1166.2px;font-size:17px;color:#111;transform:scaleX(0.9353);transform-origin:0 0;">Cancel</div>
<div class="a" style="left:1173px;top:1157px;width:110px;height:31px;background:#e1e1e1;border:1px solid #adadad"></div>
<div class="t" style="left:1208.2px;top:1166.2px;font-size:17px;color:#111;transform:scaleX(0.9032);transform-origin:0 0;">Save</div></div></body></html>
